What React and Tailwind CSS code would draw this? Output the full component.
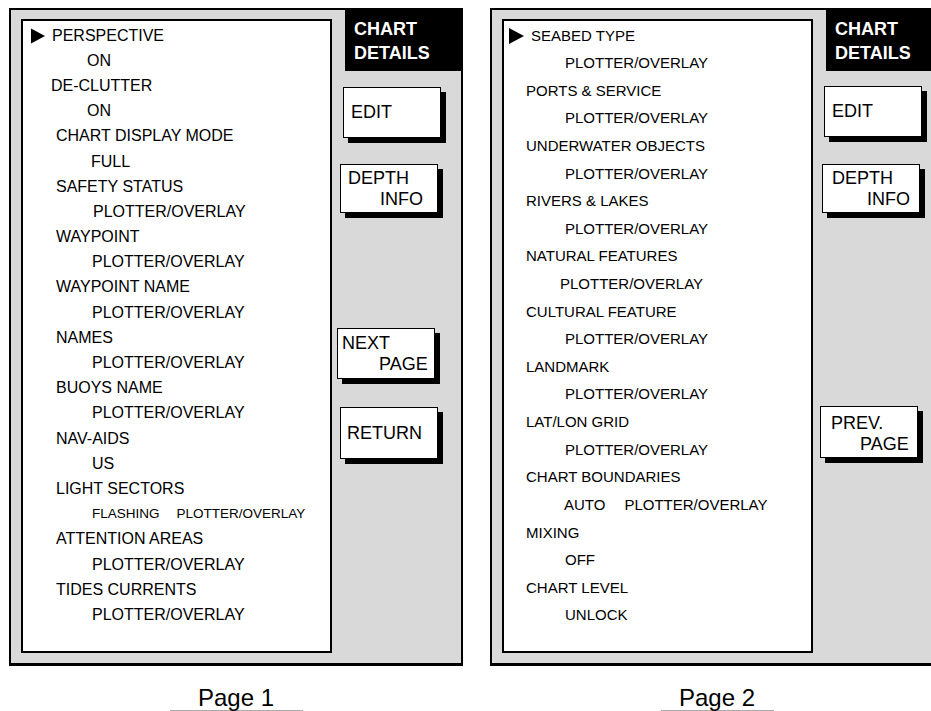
import React from "react";

const page1 = [
  { t: "PERSPECTIVE", x: 8, arrow: true },
  { t: "ON", x: 64 },
  { t: "DE-CLUTTER", x: 28 },
  { t: "ON", x: 64 },
  { t: "CHART DISPLAY MODE", x: 33 },
  { t: "FULL", x: 68 },
  { t: "SAFETY STATUS", x: 33 },
  { t: "PLOTTER/OVERLAY", x: 70 },
  { t: "WAYPOINT", x: 33 },
  { t: "PLOTTER/OVERLAY", x: 69 },
  { t: "WAYPOINT NAME", x: 33 },
  { t: "PLOTTER/OVERLAY", x: 69 },
  { t: "NAMES", x: 33 },
  { t: "PLOTTER/OVERLAY", x: 69 },
  { t: "BUOYS NAME", x: 33 },
  { t: "PLOTTER/OVERLAY", x: 69 },
  { t: "NAV-AIDS", x: 33 },
  { t: "US", x: 69 },
  { t: "LIGHT SECTORS", x: 33 },
  { t: "FLASHING", x: 69, small: true, extra: "PLOTTER/OVERLAY" },
  { t: "ATTENTION AREAS", x: 33 },
  { t: "PLOTTER/OVERLAY", x: 69 },
  { t: "TIDES CURRENTS", x: 33 },
  { t: "PLOTTER/OVERLAY", x: 69 },
];

const page2 = [
  { t: "SEABED TYPE", x: 5, arrow: true },
  { t: "PLOTTER/OVERLAY", x: 61 },
  { t: "PORTS & SERVICE", x: 22 },
  { t: "PLOTTER/OVERLAY", x: 61 },
  { t: "UNDERWATER OBJECTS", x: 22 },
  { t: "PLOTTER/OVERLAY", x: 61 },
  { t: "RIVERS & LAKES", x: 22 },
  { t: "PLOTTER/OVERLAY", x: 61 },
  { t: "NATURAL FEATURES", x: 22 },
  { t: "PLOTTER/OVERLAY", x: 56 },
  { t: "CULTURAL FEATURE", x: 22 },
  { t: "PLOTTER/OVERLAY", x: 61 },
  { t: "LANDMARK", x: 22 },
  { t: "PLOTTER/OVERLAY", x: 61 },
  { t: "LAT/LON GRID", x: 22 },
  { t: "PLOTTER/OVERLAY", x: 61 },
  { t: "CHART BOUNDARIES", x: 22 },
  { t: "AUTO", x: 60, extra: "PLOTTER/OVERLAY" },
  { t: "MIXING", x: 22 },
  { t: "OFF", x: 61 },
  { t: "CHART LEVEL", x: 22 },
  { t: "UNLOCK", x: 61 },
];

function Arrow({ className }) {
  return (
    <svg width="15" height="16" viewBox="0 0 15 16" className={className}>
      <polygon points="0,0 15,8 0,16" fill="#000" />
    </svg>
  );
}

function Btn({ lines, className, pl, pl2 }) {
  // boutons blancs avec ombre noire décalée
  if (lines.length === 1) {
    return (
      <div
        className={`w-[98px] bg-white border border-black shadow-[5px_5px_0_#000] flex items-center text-[18px] ${className}`}
        style={{ paddingLeft: pl }}
      >
        {lines[0]}
      </div>
    );
  }
  return (
    <div
      className={`w-[98px] bg-white border border-black shadow-[5px_5px_0_#000] text-[18px] leading-[21px] ${className}`}
    >
      <div style={{ paddingLeft: pl }}>{lines[0]}</div>
      <div style={{ paddingLeft: pl2 }}>{lines[1]}</div>
    </div>
  );
}

export default function App() {
  return (
    <div className="w-[931px] h-[711px] overflow-hidden bg-white text-black font-['Liberation_Sans',Arial,sans-serif] flex gap-[27px] pl-[9px] pt-[8px]">
      {/* Page 1 */}
      <div className="shrink-0 flex flex-col items-center">
        <div className="w-[454px] h-[658px] border-2 border-b-[3px] border-black bg-[#d9d9d9] flex items-start">
          <div className="ml-[10px] mt-[9px] w-[311px] h-[634px] shrink-0 border-2 border-black bg-white pt-[2px]">
            {page1.map((r, i) => (
              <div key={i} className="h-[25.2px] flex items-center text-[16px] whitespace-nowrap" style={{ paddingLeft: r.x }}>
                {r.arrow && <Arrow className="mr-[7px] w-[14px] h-[16px]" />}
                {r.small ? (
                  <>
                    <span className="text-[13.5px]">{r.t}</span>
                    <span className="text-[13.5px] ml-[17px]">{r.extra}</span>
                  </>
                ) : (
                  <span>{r.t}</span>
                )}
              </div>
            ))}
          </div>
          <div className="flex-1 flex flex-col">
            <div className="self-end w-[116px] h-[61px] bg-black text-white font-bold text-[18px] leading-[24px] pl-[9px] pt-[7px]">
              <div>CHART</div>
              <div>DETAILS</div>
            </div>
            <Btn lines={["EDIT"]} className="h-[51px] mt-[16px] ml-[11px]" pl={7} />
            <Btn lines={["DEPTH", "INFO"]} className="h-[49px] mt-[26px] ml-[8px] pt-[3px]" pl={7} pl2={39} />
            <Btn lines={["NEXT", "PAGE"]} className="h-[51px] mt-[115px] ml-[5px] pt-[4px]" pl={4} pl2={41} />
            <Btn lines={["RETURN"]} className="h-[52px] mt-[28px] ml-[8px]" pl={6} />
          </div>
        </div>
        <div className="mt-[20px] w-[133px] h-[25px] border-b border-[#aaaaaa] text-center text-[24px] leading-[24px]">
          Page 1
        </div>
      </div>

      {/* Page 2 */}
      <div className="shrink-0 flex flex-col items-center">
        <div className="w-[454px] h-[658px] border-2 border-b-[3px] border-black bg-[#d9d9d9] flex items-start">
          <div className="ml-[10px] mt-[9px] w-[311px] h-[634px] shrink-0 border-2 border-black bg-white pt-[1px]">
            {page2.map((r, i) => (
              <div key={i} className="h-[27.62px] flex items-center text-[15px] whitespace-nowrap" style={{ paddingLeft: r.x }}>
                {r.arrow && <Arrow className="mr-[7px] w-[15px] h-[16px]" />}
                <span>{r.t}</span>
                {r.extra && <span className="ml-[19px]">{r.extra}</span>}
              </div>
            ))}
          </div>
          <div className="flex-1 flex flex-col">
            <div className="self-end w-[116px] h-[61px] bg-black text-white font-bold text-[18px] leading-[24px] pl-[9px] pt-[7px]">
              <div>CHART</div>
              <div>DETAILS</div>
            </div>
            <Btn lines={["EDIT"]} className="h-[51px] mt-[15px] ml-[11px]" pl={7} />
            <Btn lines={["DEPTH", "INFO"]} className="h-[49px] mt-[27px] ml-[9px] pt-[3px]" pl={9} pl2={44} />
            <Btn lines={["PREV.", "PAGE"]} className="h-[52px] mt-[193px] ml-[7px] pt-[6px]" pl={10} pl2={39} />
          </div>
        </div>
        <div className="mt-[20px] w-[113px] h-[25px] border-b border-[#aaaaaa] text-center text-[24px] leading-[24px]">
          Page 2
        </div>
      </div>
    </div>
  );
}
